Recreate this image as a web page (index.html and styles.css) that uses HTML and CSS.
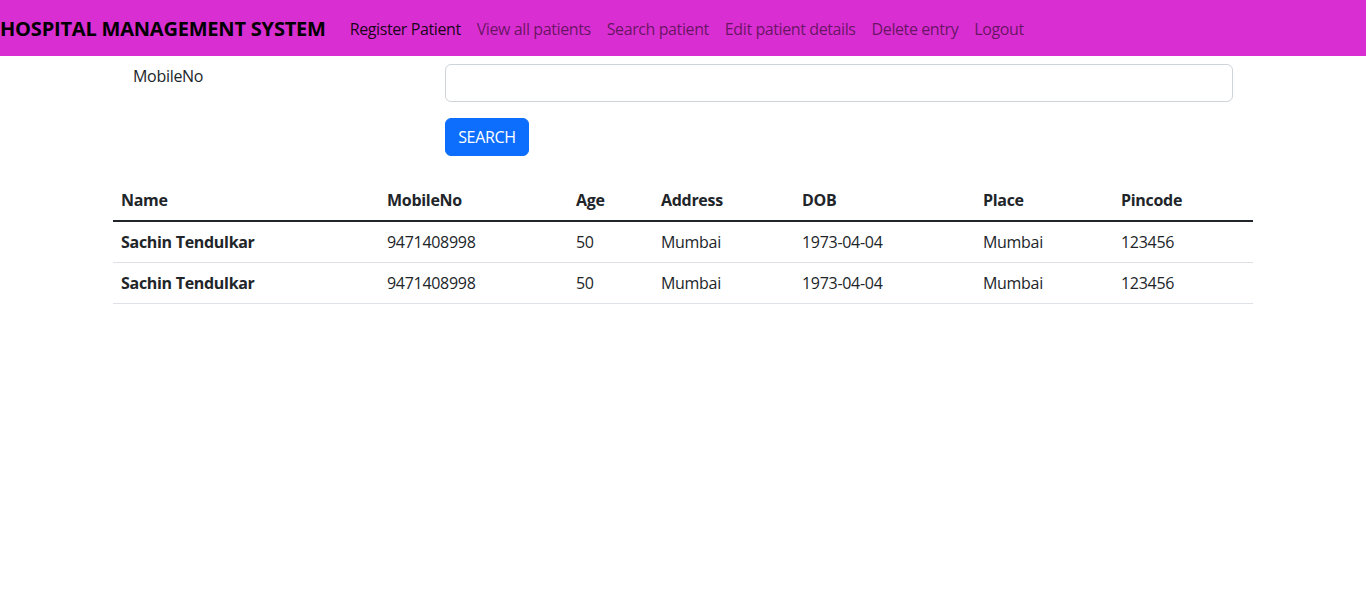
FILE: index.html
```html
<!DOCTYPE html>
<html>
<head>
<meta charset="utf-8">
<link rel="stylesheet" href="styles.css">
</head>
<body>
<nav class="navbar">
  <span class="brand">HOSPITAL MANAGEMENT SYSTEM</span>
  <ul class="nav">
    <li><a class="nav-link active" href="#">Register Patient</a></li>
    <li><a class="nav-link" href="#">View all patients</a></li>
    <li><a class="nav-link" href="#">Search patient</a></li>
    <li><a class="nav-link" href="#">Edit patient details</a></li>
    <li><a class="nav-link" href="#">Delete entry</a></li>
    <li><a class="nav-link" href="#">Logout</a></li>
  </ul>
</nav>
<main class="container">
  <form class="search-form">
    <label class="form-label" for="mobile">MobileNo</label>
    <input class="form-control" id="mobile" type="text">
    <button class="btn" type="button">SEARCH</button>
  </form>
  <table class="table">
    <colgroup>
      <col class="c-name"><col class="c-mobile"><col class="c-age"><col class="c-addr"><col class="c-dob"><col class="c-place"><col class="c-pin">
    </colgroup>
    <thead>
      <tr><th>Name</th><th>MobileNo</th><th>Age</th><th>Address</th><th>DOB</th><th>Place</th><th>Pincode</th></tr>
    </thead>
    <tbody>
      <tr><th>Sachin Tendulkar</th><td>9471408998</td><td>50</td><td>Mumbai</td><td>1973-04-04</td><td>Mumbai</td><td>123456</td></tr>
      <tr><th>Sachin Tendulkar</th><td>9471408998</td><td>50</td><td>Mumbai</td><td>1973-04-04</td><td>Mumbai</td><td>123456</td></tr>
    </tbody>
  </table>
</main>
</body>
</html>
```
FILE: styles.css
```css
* { box-sizing: border-box; }
html, body { margin: 0; padding: 0; }
body {
  font-family: "Open Sans", "Noto Sans", sans-serif;
  font-size: 16px;
  line-height: 24px;
  color: #212529;
  background: #fff;
  letter-spacing: -0.3px;
}
.navbar {
  height: 56px;
  background: #d92ed1;
  display: flex;
  align-items: center;
  padding-top: 1px;
}
.brand {
  font-size: 20px;
  font-weight: 700;
  color: #000;
  margin-right: 16px;
  line-height: 30px;
  letter-spacing: -0.2px;
}
.nav {
  list-style: none;
  margin: 0;
  padding: 0;
  display: flex;
}
.nav-link {
  display: block;
  padding: 8px;
  color: rgba(0, 0, 0, 0.55);
  text-decoration: none;
  letter-spacing: -0.4px;
}
.nav-link.active { color: rgba(0, 0, 0, 0.9); }
.container {
  width: 1140px;
  margin: 0 auto;
}
.search-form {
  display: grid;
  grid-template-columns: 312px 788px;
  row-gap: 16px;
  padding-left: 20px;
  padding-top: 8px;
  align-items: start;
}
.form-label { line-height: 24px; }
.form-control {
  grid-column: 2;
  height: 38px;
  border: 1px solid #ced4da;
  border-radius: 6px;
  font: inherit;
  padding: 6px 12px;
}
.btn {
  grid-column: 2;
  justify-self: start;
  width: 84px;
  height: 38px;
  background: #0d6efd;
  color: #fff;
  border: 1px solid #0d6efd;
  border-radius: 6px;
  font: inherit;
  letter-spacing: -0.3px;
  padding: 0;
}
.table {
  width: 1140px;
  border-collapse: collapse;
  table-layout: fixed;
  margin-top: 24px;
}
.c-name { width: 266px; }
.c-mobile { width: 189px; }
.c-age { width: 85px; }
.c-addr { width: 141px; }
.c-dob { width: 181px; }
.c-place { width: 138px; }
.c-pin { width: 140px; }
.table th, .table td {
  padding: 8px;
  text-align: left;
  height: 40px;
  line-height: 24px;
  border-bottom: 1px solid #dee2e6;
}
.table th { font-weight: 700; }
.table td { font-weight: 400; }
.table thead th { border-bottom: 2px solid #212529; }
```
